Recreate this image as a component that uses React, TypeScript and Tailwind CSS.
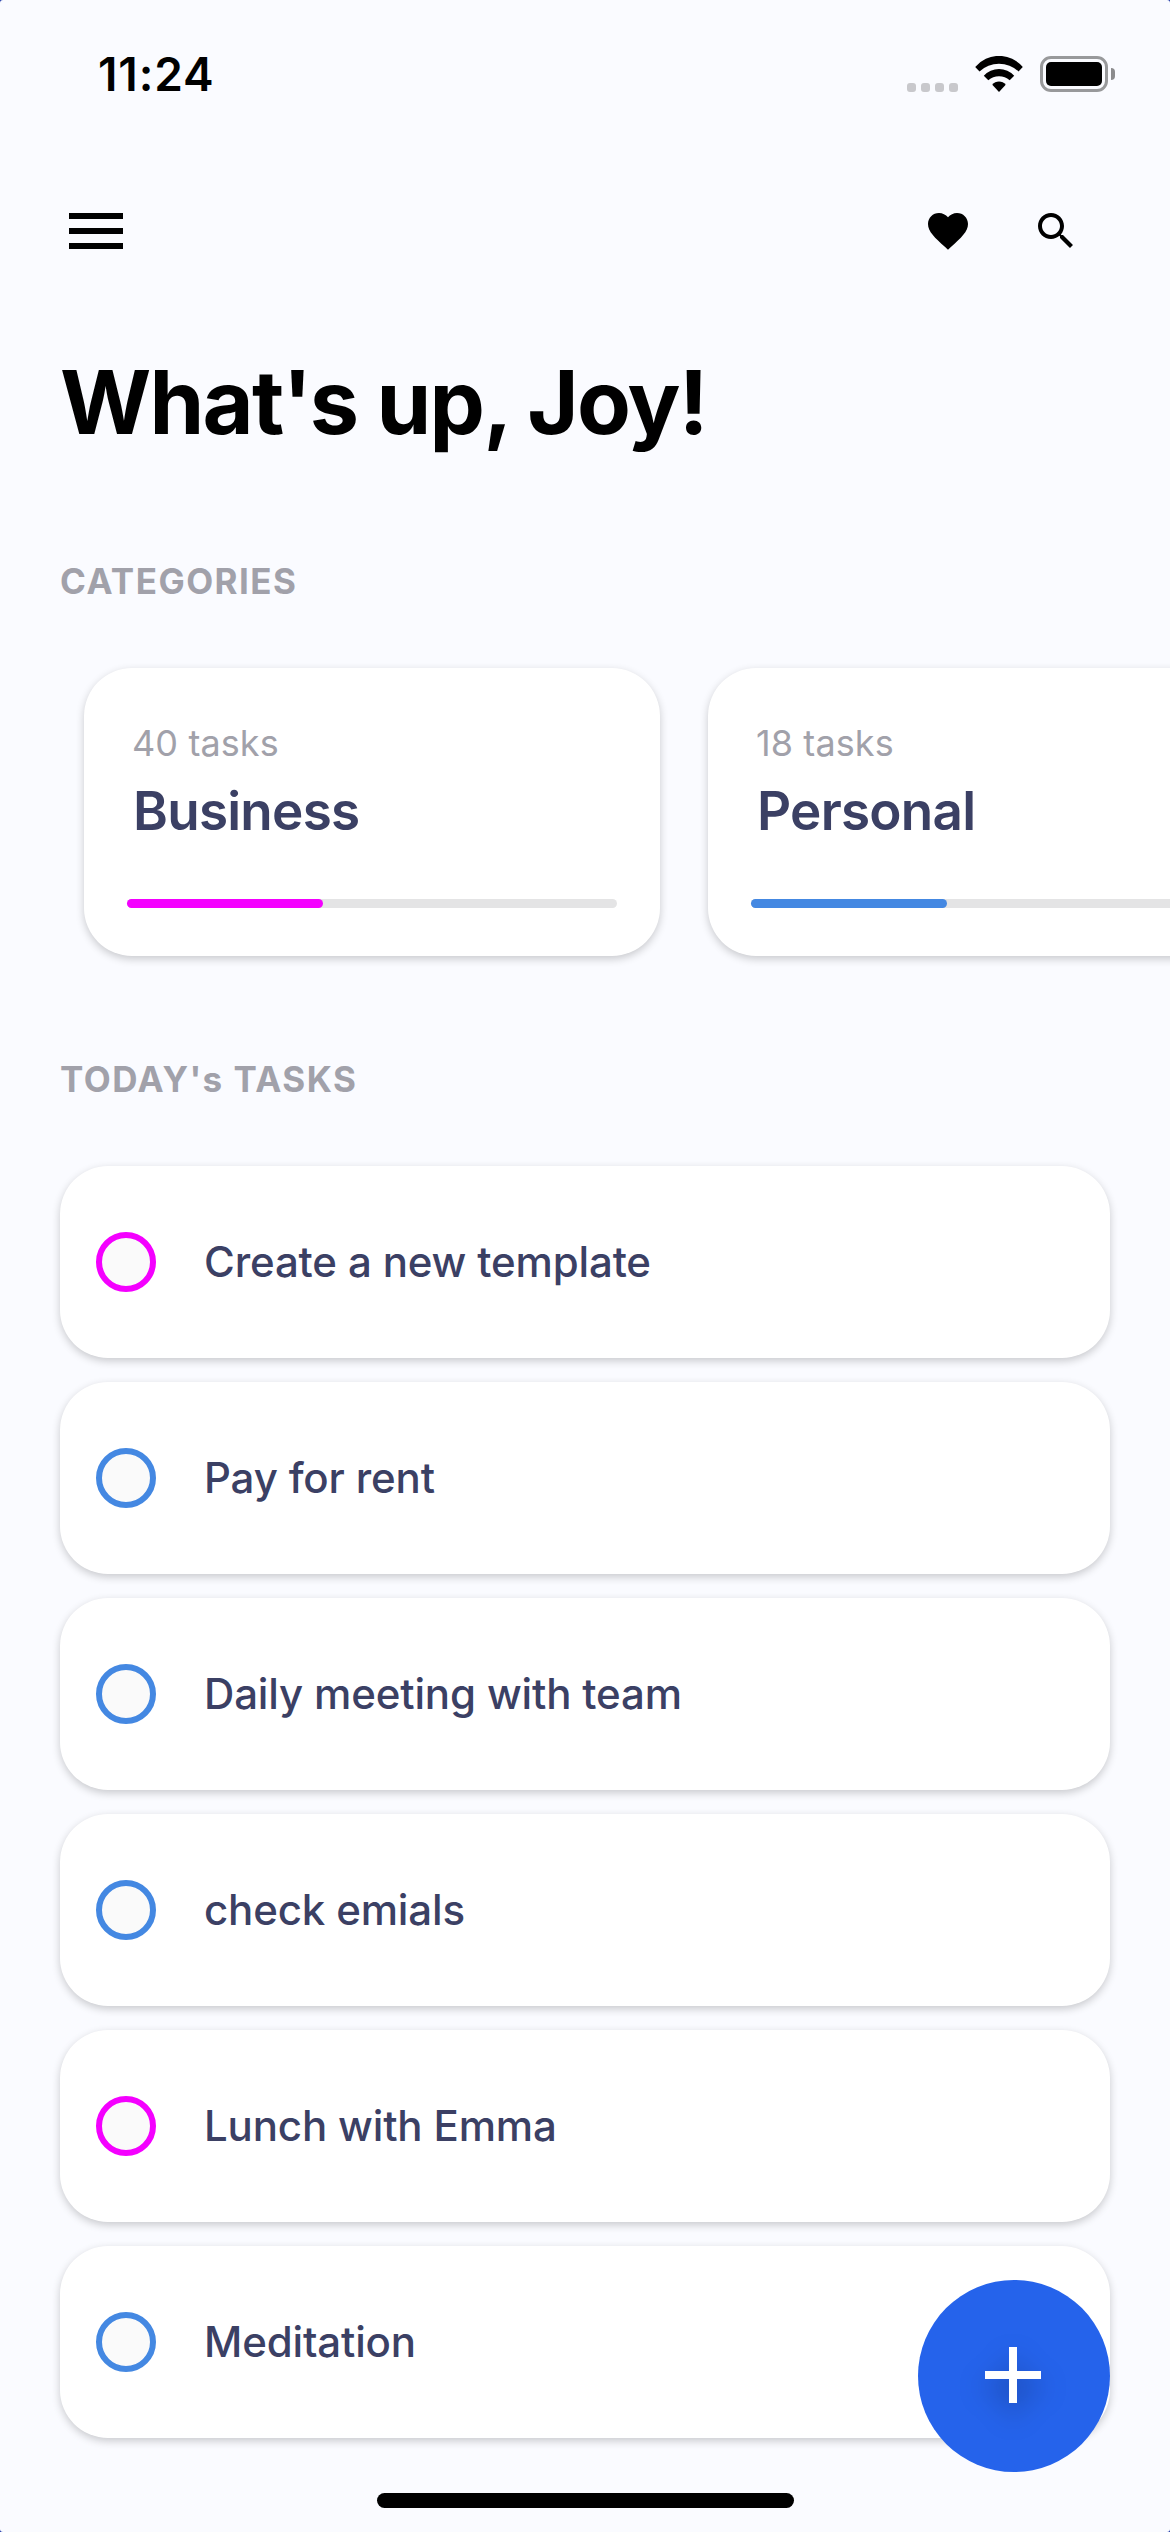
import React from 'react';

type Accent = 'pink' | 'blue';

const categories: { count: string; name: string; accent: Accent; progress: number }[] = [
  { count: '40 tasks', name: 'Business', accent: 'pink', progress: 40 },
  { count: '18 tasks', name: 'Personal', accent: 'blue', progress: 40 },
];

const tasks: { title: string; accent: Accent }[] = [
  { title: 'Create a new template', accent: 'pink' },
  { title: 'Pay for rent', accent: 'blue' },
  { title: 'Daily meeting with team', accent: 'blue' },
  { title: 'check emials', accent: 'blue' },
  { title: 'Lunch with Emma', accent: 'pink' },
  { title: 'Meditation', accent: 'blue' },
];

const fill: Record<Accent, string> = { pink: 'bg-[#f400ff]', blue: 'bg-[#4488e2]' };
const ring: Record<Accent, string> = { pink: 'border-[#f400ff]', blue: 'border-[#4488e2]' };

function StatusBar() {
  return (
    <div className="flex h-[148px] shrink-0 items-center justify-between pl-[98px] pr-[55px]">
      <span className="text-[46px] leading-[56px] font-semibold tracking-[0.87px]">11:24</span>
      <div className="flex h-[38px] items-center">
        <div className="mt-[26px] flex gap-[5px]">
          {[0, 1, 2, 3].map((dot) => (
            <span key={dot} className="size-[9px] rounded-[3px] bg-[#c8c8cc]" />
          ))}
        </div>
        <svg className="ml-[17px] h-[36px] w-[48px]" viewBox="0 0 48 36">
          <path d="M.2 11A31 31 0 0 1 47.8 11L43.5 15.4A28.5 28.5 0 0 0 4.5 15.4Z" />
          <path d="M8.8 19.7A20.6 20.6 0 0 1 39.2 19.7L34.7 24.3A16.3 16.3 0 0 0 13.3 24.3Z" />
          <path d="M17.3 28.8A8.4 8.4 0 0 1 30.7 28.8L24 36Z" />
        </svg>
        <div className="ml-[17px] h-[36px] w-[68px] rounded-[11px] border-[3px] border-[#98999b] p-[3px]">
          <div className="h-full rounded-[5px] bg-black" />
        </div>
        <div className="ml-[3px] h-[12px] w-[4px] rounded-r-full bg-[#8b8b8d]" />
      </div>
    </div>
  );
}

function Header() {
  return (
    <div className="flex h-[166px] shrink-0 items-center justify-between pl-[60px] pr-[90px]">
      <svg className="size-[72px]" viewBox="0 0 24 24">
        <path d="M3 18h18v-2H3v2zm0-5h18v-2H3v2zm0-7v2h18V6H3z" />
      </svg>
      <div className="flex gap-[60px]">
        <svg className="size-[48px]" viewBox="0 0 24 24">
          <path d="M12 21.35l-1.45-1.32C5.4 15.36 2 12.28 2 8.5 2 5.42 4.42 3 7.5 3c1.74 0 3.41.81 4.5 2.09C13.09 3.81 14.76 3 16.5 3 19.58 3 22 5.42 22 8.5c0 3.78-3.4 6.86-8.55 11.54L12 21.35z" />
        </svg>
        <svg className="size-[48px]" viewBox="0 0 24 24">
          <path d="M15.5 14h-.79l-.28-.27C15.41 12.59 16 11.11 16 9.5 16 5.91 13.09 3 9.5 3S3 5.91 3 9.5 5.91 16 9.5 16c1.61 0 3.09-.59 4.23-1.57l.27.28v.79l5 4.99L20.49 19l-4.99-5zm-6 0C7.01 14 5 11.99 5 9.5S7.01 5 9.5 5 14 7.01 14 9.5 11.99 14 9.5 14z" />
        </svg>
      </div>
    </div>
  );
}

export default function App() {
  return (
    <div className="h-[2532px] w-[1170px] bg-[#1f3aa8]">
      <div className="relative flex h-full w-full flex-col overflow-hidden rounded-[3px] bg-[#fafbff] font-['Inter',sans-serif] whitespace-nowrap text-black">
        <StatusBar />
        <Header />

        <h1 className="h-[176px] shrink-0 pl-[60px] text-[88px] leading-[176px] font-bold tracking-[-1.75px]">
          What's up, Joy!
        </h1>

        <h2 className="mt-[63px] pl-[60px] text-[35px] leading-[56px] font-bold tracking-[1.46px] text-[#a1a1aa]">
          CATEGORIES
        </h2>
        <div className="mt-[59px] flex shrink-0 gap-12 pl-[84px]">
          {categories.map((category) => (
            <div
              key={category.name}
              className="h-[288px] w-[576px] shrink-0 rounded-[48px] bg-white pt-[53px] shadow-[0_3px_8.5px_rgba(0,0,0,0.2)]"
            >
              <p className="pl-[48px] text-[36px] leading-[44px] tracking-[0.1px] text-[#a1a1aa]">{category.count}</p>
              <p className="mt-[14px] pl-[49px] text-[53px] leading-[64px] font-semibold tracking-[-0.75px] text-[#3b4064]">
                {category.name}
              </p>
              <div className="mt-[56px] ml-[43px] h-[9px] w-[490px] rounded-full bg-[#e4e4e5]">
                <div
                  className={`h-full rounded-full ${fill[category.accent]}`}
                  style={{ width: `${category.progress}%` }}
                />
              </div>
            </div>
          ))}
        </div>

        <h2 className="mt-[95px] pl-[60px] text-[35px] leading-[56px] font-bold tracking-[1.5px] text-[#a1a1aa]">
          TODAY's TASKS
        </h2>
        <div className="mt-[59px] flex flex-col gap-6 px-[60px]">
          {tasks.map((task) => (
            <div
              key={task.title}
              className="flex h-[192px] shrink-0 items-center rounded-[48px] bg-white pl-9 shadow-[0_3px_8.5px_rgba(0,0,0,0.2)]"
            >
              <span className={`size-[60px] rounded-full border-[6px] bg-[#fafafa] ${ring[task.accent]}`} />
              <span className="ml-12 text-[42px] leading-[60px] font-medium tracking-[-0.15px] text-[#3b4064]">
                {task.title}
              </span>
            </div>
          ))}
        </div>

        <button className="absolute right-[60px] bottom-[60px] flex size-[192px] items-center justify-center rounded-full bg-[#2563eb]">
          <svg
            className="mr-[2px] mb-[2px] size-[96px] overflow-visible fill-white drop-shadow-[0_12px_14px_rgba(0,0,0,0.3)]"
            viewBox="0 0 24 24"
          >
            <path d="M19 13h-6v6h-2v-6H5v-2h6V5h2v6h6v2z" />
          </svg>
        </button>
        <div className="absolute bottom-[24px] left-[377px] h-[15px] w-[417px] rounded-full bg-black" />
      </div>
    </div>
  );
}
